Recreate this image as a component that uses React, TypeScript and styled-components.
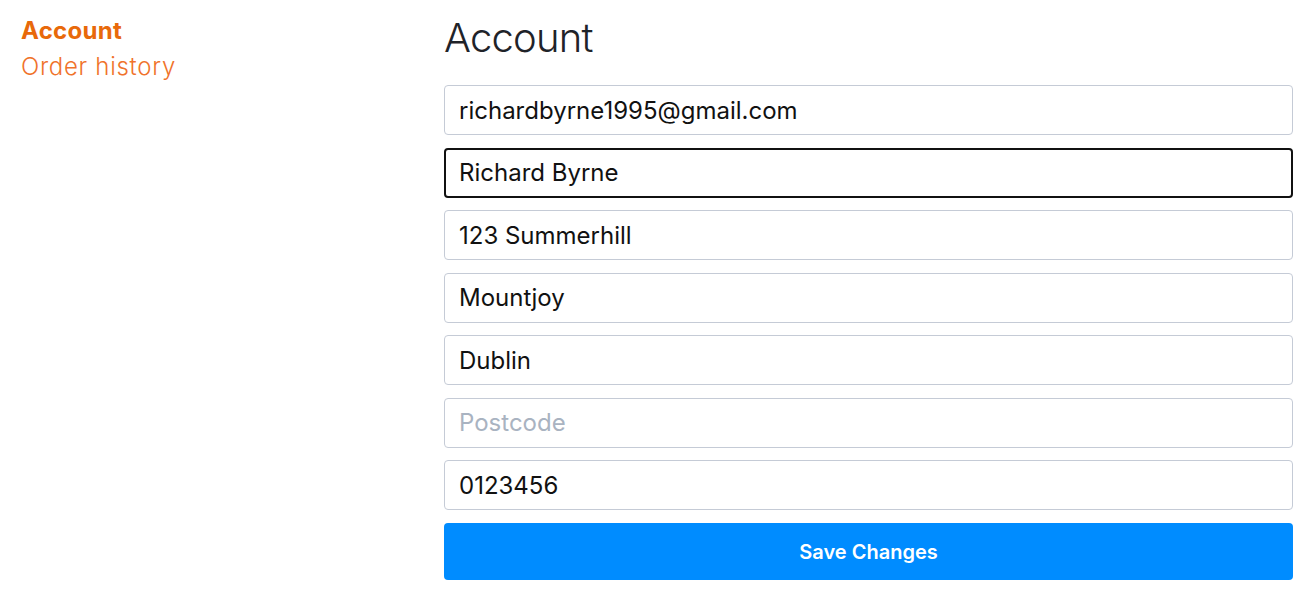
import { useEffect, useRef, useState } from 'react'
import styled, { createGlobalStyle, css } from 'styled-components'

const GlobalStyle = createGlobalStyle`
  body {
    margin: 0;
    background: #fff;
    font-family: Inter, "Noto Sans", sans-serif;
  }
`

type Field = {
  name: string
  value: string
  placeholder: string
}

const initialFields: Field[] = [
  { name: 'email', value: 'richardbyrne1995@gmail.com', placeholder: 'Email' },
  { name: 'name', value: 'Richard Byrne', placeholder: 'Name' },
  { name: 'address1', value: '123 Summerhill', placeholder: 'Address line 1' },
  { name: 'address2', value: 'Mountjoy', placeholder: 'Address line 2' },
  { name: 'city', value: 'Dublin', placeholder: 'City' },
  { name: 'postcode', value: '', placeholder: 'Postcode' },
  { name: 'phone', value: '0123456', placeholder: 'Phone' },
]

export default function App() {
  const [fields, setFields] = useState(initialFields)
  const [active, setActive] = useState('account')
  const nameRef = useRef<HTMLInputElement>(null)

  useEffect(() => {
    const el = nameRef.current
    if (el) {
      el.focus()
      el.setSelectionRange(0, 0)
    }
  }, [])

  const handleChange = (name: string, value: string) => {
    setFields(fields.map(f => (f.name === name ? { ...f, value } : f)))
  }

  return (
    <>
      <GlobalStyle />
      <Page>
        <Sidebar>
          <NavLink $active={active === 'account'} onClick={() => setActive('account')}>
            Account
          </NavLink>
          <NavLink $active={active === 'orders'} onClick={() => setActive('orders')}>
            Order history
          </NavLink>
        </Sidebar>
        <Main>
          <Title>Account</Title>
          <Form onSubmit={e => e.preventDefault()}>
            {fields.map(field => (
              <Input
                key={field.name}
                ref={field.name === 'name' ? nameRef : undefined}
                name={field.name}
                value={field.value}
                placeholder={field.placeholder}
                $focused={field.name === 'name'}
                onChange={e => handleChange(field.name, e.target.value)}
              />
            ))}
            <SaveButton type="submit">Save Changes</SaveButton>
          </Form>
        </Main>
      </Page>
    </>
  )
}

const Page = styled.div`
  display: grid;
  grid-template-columns: 423px 1fr;
  padding: 0 14px 0 21px;
`

const Sidebar = styled.nav`
  display: flex;
  flex-direction: column;
  align-items: flex-start;
  padding-top: 13px;
`

const NavLink = styled.a<{ $active: boolean }>`
  font-size: 24px;
  line-height: 36px;
  font-weight: 300;
  letter-spacing: 0.7px;
  color: #f0722a;
  cursor: pointer;
  ${({ $active }) => $active && css`
    font-weight: 700;
    letter-spacing: 0.3px;
    color: #e8690a;
  `}
`

const Main = styled.main`
  display: flex;
  flex-direction: column;
  padding-top: 14px;
`

const Title = styled.h1`
  margin: 0 0 23px;
  font-size: 40px;
  line-height: 48px;
  font-weight: 300;
  letter-spacing: -0.8px;
  color: #1f2329;
`

const Form = styled.form`
  display: flex;
  flex-direction: column;
  gap: 12.5px;
`

const Input = styled.input<{ $focused: boolean }>`
  box-sizing: border-box;
  width: 100%;
  height: 50px;
  padding: 0 14px;
  border: 1px solid #c5cbd6;
  border-radius: 4px;
  font-family: Inter, "Noto Sans", sans-serif;
  font-size: 24px;
  font-weight: 400;
  color: #111;
  background: #fff;
  outline: none;
  caret-color: #111;
  &::placeholder {
    color: #a9b3c1;
  }
  ${({ $focused }) => $focused && css`
    border: 2px solid #111;
    padding: 0 13px;
  `}
`

const SaveButton = styled.button`
  height: 57px;
  margin-top: 0.5px;
  border: none;
  border-radius: 4px;
  background: #008cff;
  color: #fff;
  font-family: Inter, "Noto Sans", sans-serif;
  font-size: 20px;
  font-weight: 600;
  cursor: pointer;
`
